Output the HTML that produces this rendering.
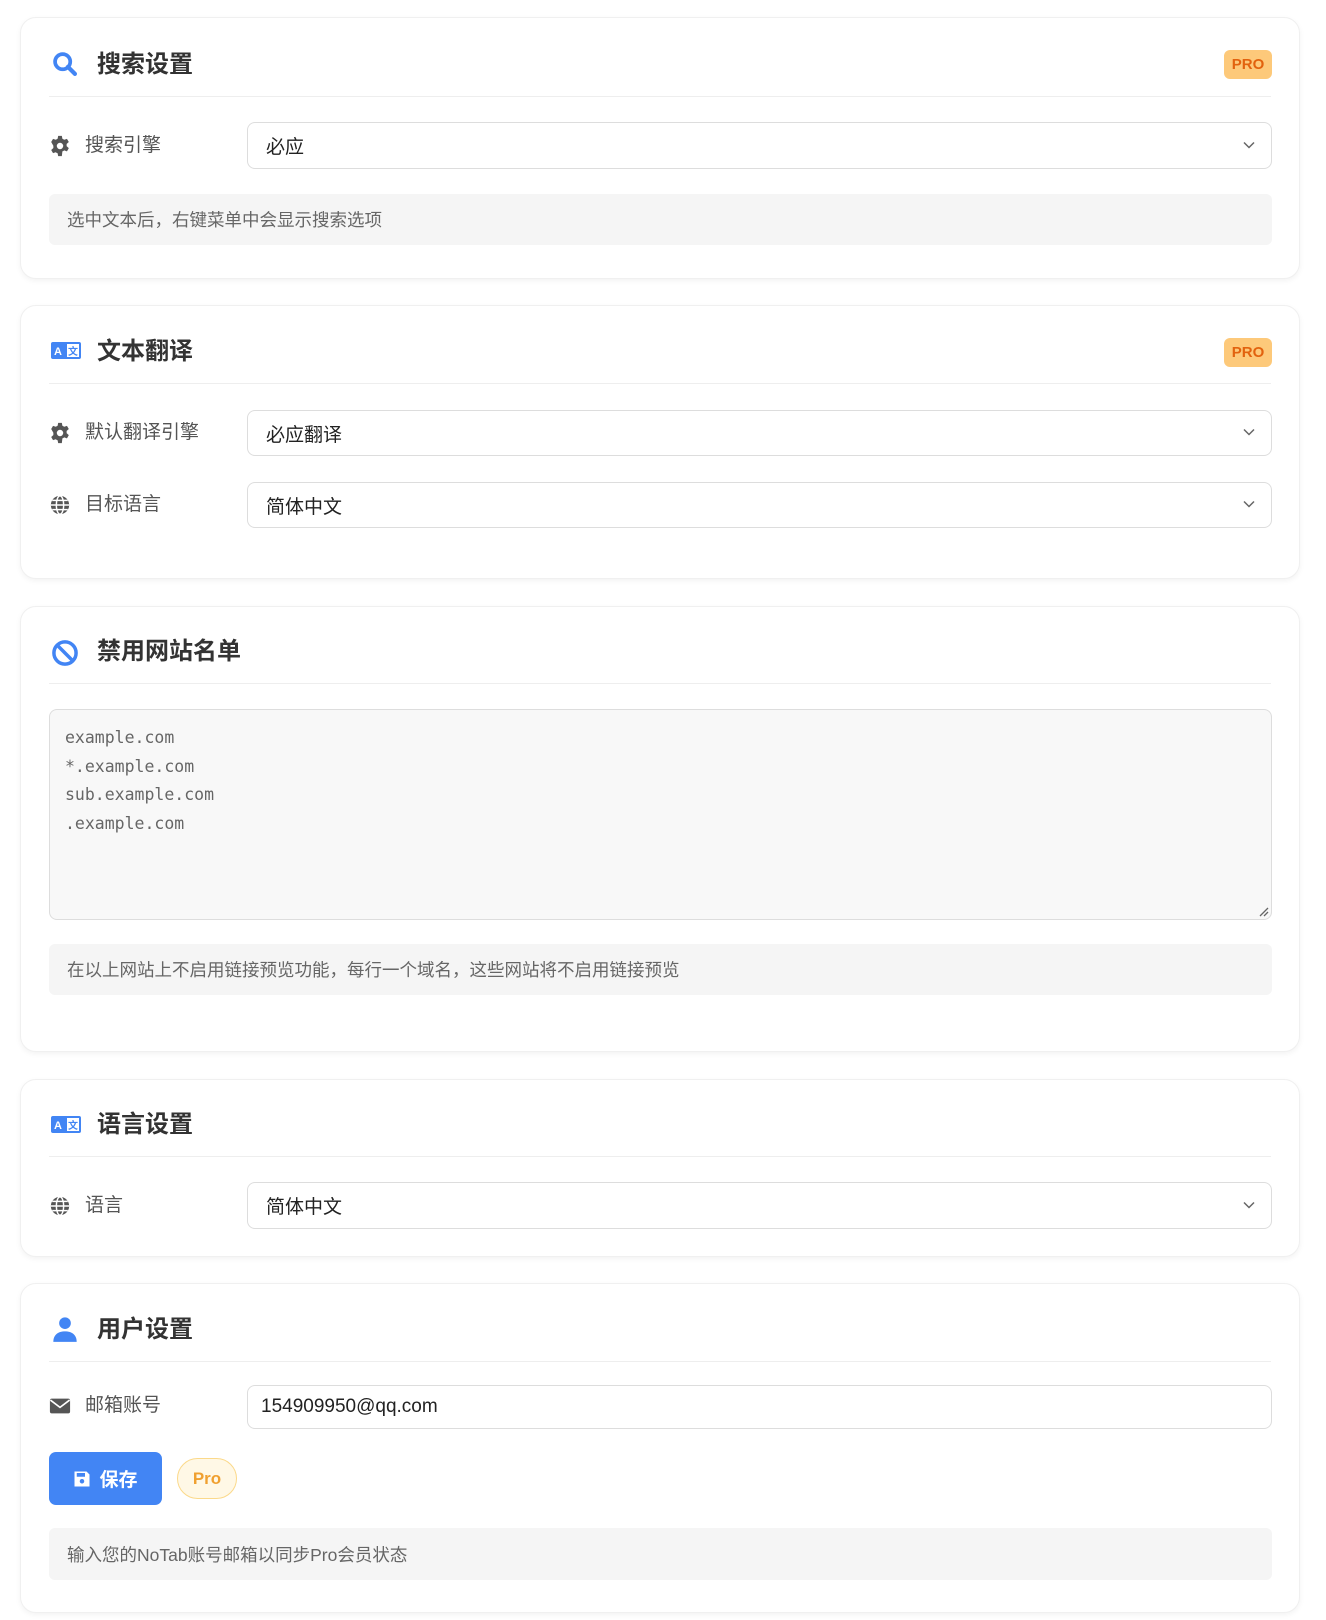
<!DOCTYPE html>
<html><head><meta charset="utf-8"><style>
*{box-sizing:border-box;margin:0;padding:0}
body{width:1326px;height:1620px;background:#fff;font-family:"Liberation Sans","Noto Sans CJK SC",sans-serif;position:relative;overflow:hidden}
.card{position:absolute;left:20px;width:1280px;background:#fff;border:1px solid #f0f0f0;border-radius:16px;box-shadow:0 2px 6px rgba(0,0,0,0.05)}
.abs{position:absolute}
.title{position:absolute;left:76px;font-size:24px;font-weight:bold;color:#333;line-height:30px}
.ticon{position:absolute;left:30px;width:28px;height:28px}
.div{position:absolute;left:28px;right:28px;height:1px;background:#eee}
.pro{position:absolute;right:27px;width:48px;height:29px;background:#fdc97a;color:#e2620e;border-radius:6px;font-weight:bold;font-size:15px;text-align:center;line-height:29px}
.lbl{position:absolute;left:28px;font-size:19px;color:#555;line-height:24px;display:flex;align-items:center}
.lbl svg{margin-right:14px}
.sel{position:absolute;left:226px;right:27px;border:1px solid #ddd;border-radius:8px;font-size:19px;color:#222;padding-left:18px;display:flex;align-items:center}
.sel .chev{position:absolute;right:16px;top:50%;margin-top:-5px}
.help{position:absolute;left:28px;right:27px;background:#f5f5f5;border-radius:6px;font-size:17.5px;color:#666;padding-left:18px;display:flex;align-items:center}
</style></head><body>
<svg width="0" height="0" style="position:absolute"><defs>
<symbol id="gear" viewBox="0 0 24 24"><path fill="#555" d="M10 1h4l.6 3.1a8 8 0 0 1 2 1.1l3-1 2 3.5-2.4 2.1a8 8 0 0 1 0 2.4l2.4 2.1-2 3.5-3-1a8 8 0 0 1-2 1.1L14 23h-4l-.6-3.1a8 8 0 0 1-2-1.1l-3 1-2-3.5 2.4-2.1a8 8 0 0 1 0-2.4L2.4 7.7l2-3.5 3 1a8 8 0 0 1 2-1.1z M12 8.5a3.5 3.5 0 1 0 0 7a3.5 3.5 0 1 0 0-7z" fill-rule="evenodd"/></symbol>
<symbol id="globe" viewBox="0 0 24 24"><circle cx="12" cy="12" r="10" fill="#555"/><g stroke="#fff" stroke-width="1.6" fill="none"><ellipse cx="12" cy="12" rx="4" ry="10"/><path d="M2 12h20M3.5 7h17M3.5 17h17"/></g></symbol>
<symbol id="chev" viewBox="0 0 12 8"><path d="M1 1.5l5 5 5-5" stroke="#666" stroke-width="1.5" fill="none"/></symbol>
<symbol id="az" viewBox="0 0 30 20"><rect x="0" y="1" width="30" height="17" rx="2" fill="#4285f4"/><rect x="16" y="3" width="12" height="13" fill="#fff"/><text x="3" y="14" font-size="11" font-weight="bold" fill="#fff" font-family="Liberation Sans">A</text><text x="17" y="14" font-size="10" font-weight="bold" fill="#4285f4" font-family="Noto Sans CJK SC">文</text></symbol>
</defs></svg>

<div class="card" style="top:17px;height:262px">
<svg class="ticon" style="top:32px" viewBox="0 0 24 24"><circle cx="10" cy="10" r="6.5" stroke="#4285f4" stroke-width="3.2" fill="none"/><path d="M14.5 14.5l6 6" stroke="#4285f4" stroke-width="3.6" stroke-linecap="round"/></svg>
<div class="title" style="top:32px">搜索设置</div>
<div class="pro" style="top:32px">PRO</div>
<div class="div" style="top:78px"></div>
<div class="lbl" style="top:116px"><svg width="22" height="22"><use href="#gear"/></svg>搜索引擎</div>
<div class="sel" style="top:104px;height:47px">必应<svg class="chev" width="12" height="8"><use href="#chev"/></svg></div>
<div class="help" style="top:176px;height:51px">选中文本后，右键菜单中会显示搜索选项</div>
</div>

<div class="card" style="top:305px;height:274px">
<svg class="ticon" style="width:30px;height:20px;top:35px" viewBox="0 0 30 20"><use href="#az"/></svg>
<div class="title" style="top:31px">文本翻译</div>
<div class="pro" style="top:32px">PRO</div>
<div class="div" style="top:77px"></div>
<div class="lbl" style="top:115px"><svg width="22" height="22"><use href="#gear"/></svg>默认翻译引擎</div>
<div class="sel" style="top:104px;height:46px">必应翻译<svg class="chev" width="12" height="8"><use href="#chev"/></svg></div>
<div class="lbl" style="top:187px"><svg width="22" height="22"><use href="#globe"/></svg>目标语言</div>
<div class="sel" style="top:176px;height:46px">简体中文<svg class="chev" width="12" height="8"><use href="#chev"/></svg></div>
</div>

<div class="card" style="top:606px;height:446px">
<svg class="ticon" style="top:32px" viewBox="0 0 24 24"><circle cx="12" cy="12" r="9.5" stroke="#4285f4" stroke-width="3" fill="none"/><path d="M5.5 5.5l13 13" stroke="#4285f4" stroke-width="3"/></svg>
<div class="title" style="top:30px">禁用网站名单</div>
<div class="div" style="top:76px"></div>
<div class="abs" style="left:28px;right:27px;top:102px;height:211px;background:#f8f8f8;border:1px solid #ddd;border-radius:8px;font-family:'DejaVu Sans Mono','Liberation Mono',monospace;font-size:16.5px;color:#666;line-height:28.5px;padding:14px 15px">example.com<br>*.example.com<br>sub.example.com<br>.example.com
<svg class="abs" style="right:2px;bottom:2px" width="10" height="10" viewBox="0 0 10 10"><path d="M1 9L9 1M5 9L9 5" stroke="#666" stroke-width="1.3"/></svg></div>
<div class="help" style="top:337px;height:51px">在以上网站上不启用链接预览功能，每行一个域名，这些网站将不启用链接预览</div>
</div>

<div class="card" style="top:1079px;height:178px">
<svg class="ticon" style="width:30px;height:20px;top:35px" viewBox="0 0 30 20"><use href="#az"/></svg>
<div class="title" style="top:30px">语言设置</div>
<div class="div" style="top:76px"></div>
<div class="lbl" style="top:114px"><svg width="22" height="22"><use href="#globe"/></svg>语言</div>
<div class="sel" style="top:102px;height:47px">简体中文<svg class="chev" width="12" height="8"><use href="#chev"/></svg></div>
</div>

<div class="card" style="top:1283px;height:330px">
<svg class="ticon" style="top:31px" viewBox="0 0 24 24"><circle cx="12" cy="7" r="5" fill="#4285f4"/><path d="M2 23c0-6 4-9 10-9s10 3 10 9z" fill="#4285f4"/></svg>
<div class="title" style="top:31px">用户设置</div>
<div class="div" style="top:77px"></div>
<div class="lbl" style="top:110px"><svg width="22" height="22" viewBox="0 0 24 24"><rect x="1" y="4" width="22" height="16" rx="2" fill="#555"/><path d="M1.5 5.5l10.5 8 10.5-8" stroke="#fff" stroke-width="1.8" fill="none"/></svg>邮箱账号</div>
<div class="sel" style="top:101px;height:44px;padding-left:13px;font-size:19px">154909950@qq.com</div>
<div class="abs" style="left:28px;top:168px;width:113px;height:53px;background:#4285f4;border-radius:7px;color:#fff;font-size:19px;font-weight:bold;display:flex;align-items:center;justify-content:center"><svg width="18" height="18" viewBox="0 0 24 24" style="margin-right:8px"><path d="M2 2h16l4 4v16H2z" fill="#fff"/><rect x="5" y="4" width="11" height="5" fill="#4285f4"/><circle cx="12" cy="15" r="3" fill="#4285f4"/></svg>保存</div>
<div class="abs" style="left:156px;top:174px;width:60px;height:41px;background:#fff8e6;border:1px solid #fbd98a;border-radius:21px;color:#f0a030;font-size:17px;font-weight:bold;text-align:center;line-height:39px">Pro</div>
<div class="help" style="top:244px;height:52px">输入您的NoTab账号邮箱以同步Pro会员状态</div>
</div>
</body></html>
